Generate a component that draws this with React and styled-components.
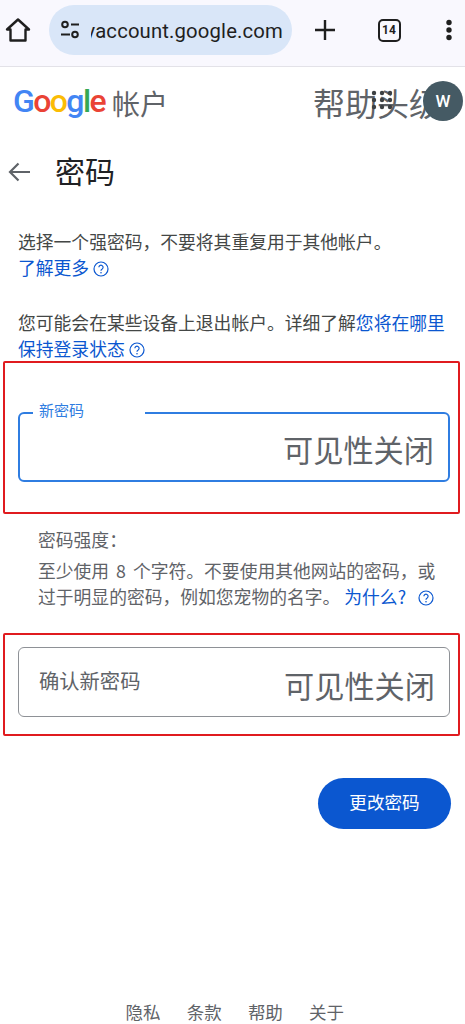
import React from 'react'
import styled, { createGlobalStyle } from 'styled-components'

const CJK = `"Noto Sans CJK SC", Roboto, sans-serif`

const Global = createGlobalStyle`
  html, body {
    margin: 0;
    padding: 0;
    background: #fff;
  }
  * {
    box-sizing: border-box;
  }
`

const Page = styled.div`
  width: 465px;
  height: 1024px;
  overflow: hidden;
  position: relative;
  background: #fff;
  font-family: ${CJK};
  color: #3c4043;
`

const Toolbar = styled.div`
  display: flex;
  align-items: center;
  height: 67px;
  padding: 0 0 6px 3px;
  background: #f9f8fe;
  border-bottom: 1px solid #e3e2e8;
`

const Pill = styled.div`
  display: flex;
  align-items: center;
  width: 243px;
  height: 50px;
  margin-left: 16px;
  padding: 0 9px 0 11px;
  border-radius: 25px;
  background: #d9e6f8;
`

const UrlClip = styled.div`
  flex: 1;
  display: flex;
  justify-content: flex-end;
  margin-left: 11px;
  padding-top: 2px;
  overflow: hidden;
`

const Url = styled.span`
  font-family: Roboto, sans-serif;
  font-size: 20.3px;
  line-height: 28px;
  letter-spacing: 0.15px;
  white-space: nowrap;
  color: #1f1f1f;
`

const ToolIcon = styled.div`
  display: flex;
  align-items: center;
  justify-content: center;
  width: 30px;
  height: 30px;
  margin-left: ${p => p.$gap}px;
  color: #1f1f1f;
`

const TabCount = styled.div`
  display: flex;
  align-items: center;
  justify-content: center;
  width: 23px;
  height: 23px;
  border: 2.5px solid #1f1f1f;
  border-radius: 5px;
  font-family: Roboto, sans-serif;
  font-size: 12px;
  font-weight: 700;
  color: #1f1f1f;
`

const Header = styled.header`
  position: relative;
  display: flex;
  align-items: center;
  height: 68px;
  padding-left: 13px;
`

const Logo = styled.div`
  display: flex;
  font-family: Roboto, sans-serif;
  font-size: 32px;
  font-weight: 500;
  letter-spacing: -1.6px;
  line-height: 40px;
`

const LogoLetter = styled.span`
  color: ${p => p.$color};
`

const Product = styled.span`
  margin-left: 7px;
  margin-top: 3px;
  font-size: 28px;
  line-height: 40px;
  color: #5f6368;
`

const HelpTitle = styled.span`
  margin-left: 145px;
  margin-top: 2px;
  font-size: 32px;
  line-height: 44px;
  white-space: nowrap;
  color: #5f6368;
`

const AppsGrid = styled.svg`
  position: absolute;
  left: 371px;
  top: 23px;
`

const Avatar = styled.div`
  position: absolute;
  left: 423px;
  top: 14px;
  display: flex;
  align-items: center;
  justify-content: center;
  width: 40px;
  height: 40px;
  border-radius: 50%;
  background: #455a64;
  color: #fff;
  font-family: Roboto, sans-serif;
  font-size: 17px;
  font-weight: 500;
`

const TitleRow = styled.div`
  display: flex;
  align-items: center;
  height: 75px;
  padding: 0 0 2px 7px;
`

const Title = styled.h1`
  margin: -4px 0 0 24px;
  font-size: 30px;
  font-weight: 400;
  line-height: 40px;
  color: #202124;
`

const Para = styled.p`
  margin: ${p => p.$top}px 0 0 18px;
  width: 440px;
  font-size: 17.8px;
  line-height: 26px;
  color: #444746;
`

const A = styled.span`
  color: #0b57d0;
`

const WhyLink = styled(A)`
  margin-left: 4px;
`

const Help = styled.svg`
  display: inline-block;
  vertical-align: -2px;
  margin-left: ${p => p.$gap || 4}px;
`

const RedBox = styled.section`
  display: flex;
  flex-direction: column;
  width: 457px;
  height: ${p => p.$h}px;
  margin-left: 3px;
  padding: ${p => p.$pad}px 8px 0 13px;
  border: 2px solid #e01b1f;
  border-radius: 2px;
`

const Field = styled.div`
  position: relative;
  display: flex;
  align-items: center;
  justify-content: space-between;
  height: 70px;
  padding: 0 14px 0 20px;
  border: ${p => (p.$focus ? '2px solid #2f7de1' : '1px solid #8e9196')};
  border-radius: 6px;
`

const FloatLabel = styled.span`
  position: absolute;
  left: 13px;
  top: -16px;
  width: 112px;
  height: 24px;
  padding-left: 6px;
  background: #fff;
  font-size: 15px;
  line-height: 24px;
  color: #2f7de1;
`

const FieldLabel = styled.span`
  margin-top: -5px;
  font-size: 20.3px;
  line-height: 28px;
  color: #5f6368;
`

const Visibility = styled.span`
  margin-left: auto;
  margin-top: ${p => p.$top}px;
  font-size: 30.2px;
  line-height: 40px;
  color: #5f6368;
`

const Strength = styled.div`
  margin: 12px 0 24px 38px;
  width: 400px;
  font-size: 17.8px;
  line-height: 26px;
  word-spacing: 3px;
  color: #5f6368;
`

const StrengthTitle = styled.div`
  margin-bottom: 5px;
`

const Actions = styled.div`
  display: flex;
  justify-content: flex-end;
  margin-top: 42px;
  padding-right: 14px;
`

const Submit = styled.button`
  width: 133px;
  height: 51px;
  padding: 0 0 4px;
  border: 0;
  border-radius: 26px;
  background: #0b57d0;
  color: #fff;
  font-family: ${CJK};
  font-size: 17.6px;
`

const Footer = styled.footer`
  display: flex;
  gap: 26.2px;
  margin-top: 171px;
  padding-left: 125.5px;
  font-size: 17.5px;
  line-height: 24px;
  color: #5f6368;
`

const HelpIcon = ({ size = 16, gap }) => (
  <Help $gap={gap} width={size} height={size} viewBox="0 0 16 16" fill="none" stroke="#0b57d0">
    <circle cx="8" cy="8" r="7" strokeWidth="1.2" />
    <path d="M5.9 6.3a2.1 2.1 0 1 1 3.3 1.7c-.8.5-1.2.9-1.2 1.7" strokeWidth="1.2" />
    <circle cx="8" cy="11.7" r=".8" fill="#0b57d0" stroke="none" />
  </Help>
)

const googleLetters = [
  ['G', '#4285f4'],
  ['o', '#ea4335'],
  ['o', '#fbbc05'],
  ['g', '#4285f4'],
  ['l', '#34a853'],
  ['e', '#ea4335']
]

export default function App () {
  return (
    <Page>
      <Global />
      <Toolbar>
        <ToolIcon $gap={0}>
          <svg width="26" height="26" viewBox="0 0 26 26" fill="none" stroke="currentColor" strokeWidth="2.4" strokeLinejoin="round">
            <path d="M13 2.5 2 12.5h3.5v11h15v-11H24z" />
          </svg>
        </ToolIcon>
        <Pill>
          <svg width="20" height="20" viewBox="0 0 20 20" fill="none" stroke="#1f1f1f" strokeWidth="2">
            <circle cx="5" cy="4.5" r="2.8" />
            <path d="M11 4.5h8M1 14.5h9" />
            <circle cx="15" cy="14.5" r="2.8" />
          </svg>
          <UrlClip>
            <Url>myaccount.google.com</Url>
          </UrlClip>
        </Pill>
        <ToolIcon $gap={18}>
          <svg width="22" height="22" viewBox="0 0 22 22" stroke="currentColor" strokeWidth="2.4">
            <path d="M11 1v20M1 11h20" />
          </svg>
        </ToolIcon>
        <ToolIcon $gap={34}>
          <TabCount>14</TabCount>
        </ToolIcon>
        <ToolIcon $gap={30}>
          <svg width="8" height="22" viewBox="0 0 8 22" fill="currentColor">
            <circle cx="4" cy="3.5" r="2.7" />
            <circle cx="4" cy="11" r="2.7" />
            <circle cx="4" cy="18.5" r="2.7" />
          </svg>
        </ToolIcon>
      </Toolbar>

      <Header>
        <Logo>
          {googleLetters.map(([ch, color], i) => (
            <LogoLetter key={i} $color={color}>{ch}</LogoLetter>
          ))}
        </Logo>
        <Product>帐户</Product>
        <HelpTitle>帮助头级</HelpTitle>
        <AppsGrid width="24" height="20" viewBox="0 0 24 20" fill="#3c4043">
          {[3, 10, 17].map(y => [3, 11, 19].map(x => (
            <circle key={`${x}-${y}`} cx={x} cy={y} r="2.2" />
          )))}
        </AppsGrid>
        <Avatar>W</Avatar>
      </Header>

      <TitleRow>
        <svg width="24" height="24" viewBox="0 0 24 24" fill="none" stroke="#5f6368" strokeWidth="2.2">
          <path d="M23 12H3M11.5 3.5 3 12l8.5 8.5" />
        </svg>
        <Title>密码</Title>
      </TitleRow>

      <Para $top={18}>
        选择一个强密码，不要将其重复用于其他帐户。
        <br />
        <A>了解更多<HelpIcon /></A>
      </Para>
      <Para $top={29}>
        您可能会在某些设备上退出帐户。详细了解<A>您将在哪里保持登录状态<HelpIcon /></A>
      </Para>

      <RedBox $h={153} $pad={49}>
        <Field $focus>
          <FloatLabel>新密码</FloatLabel>
          <Visibility $top={4}>可见性关闭</Visibility>
        </Field>
      </RedBox>

      <Strength>
        <StrengthTitle>密码强度：</StrengthTitle>
        至少使用 8 个字符。不要使用其他网站的密码，或过于明显的密码，例如您宠物的名字。<WhyLink>为什么?<HelpIcon gap={12} /></WhyLink>
      </Strength>

      <RedBox $h={103} $pad={12}>
        <Field>
          <FieldLabel>确认新密码</FieldLabel>
          <Visibility $top={6}>可见性关闭</Visibility>
        </Field>
      </RedBox>

      <Actions>
        <Submit>更改密码</Submit>
      </Actions>

      <Footer>
        <span>隐私</span>
        <span>条款</span>
        <span>帮助</span>
        <span>关于</span>
      </Footer>
    </Page>
  )
}
